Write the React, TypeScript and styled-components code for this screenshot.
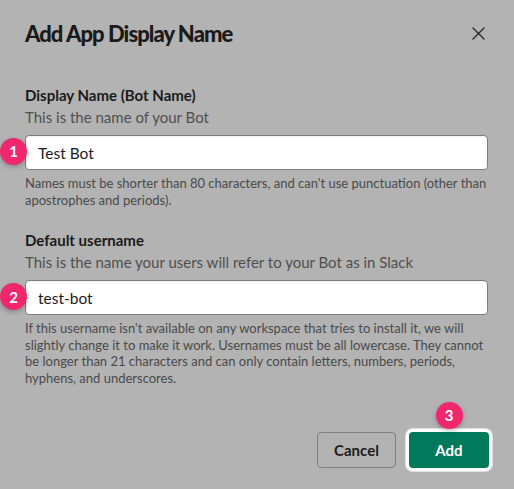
import React from "react";
import styled, { createGlobalStyle } from "styled-components";

const Global = createGlobalStyle`
  html, body { margin: 0; padding: 0; background: #b3b3b3; }
  body { font-family: Lato, "Noto Sans", sans-serif; -webkit-font-smoothing: antialiased; }
  * { box-sizing: border-box; }
`;

const Modal = styled.div`
  position: relative;
  width: 514px;
  height: 489px;
  padding: 0 26px 0 25px;
  display: flex;
  flex-direction: column;
  color: #141414;
`;

const Header = styled.div`
  display: flex;
  align-items: center;
  justify-content: space-between;
  height: 67px;
`;

const Title = styled.h1`
  margin: 0;
  font-size: 22px;
  font-weight: 900;
  letter-spacing: -0.95px;
  line-height: 26px;
  color: #1a1a1a;
`;

const Close = styled.button`
  border: 0;
  background: transparent;
  padding: 0;
  margin-right: 3px;
  width: 14px;
  height: 14px;
  display: flex;
  align-items: center;
  justify-content: center;
  color: #2b2b2b;
`;

const Field = styled.div<{ $top: number }>`
  display: flex;
  flex-direction: column;
  margin-top: ${(p) => p.$top}px;
`;

const Label = styled.div`
  font-size: 15px;
  font-weight: 700;
  line-height: 22px;
  color: #1a1a1a;
`;

const Desc = styled.div`
  font-size: 15px;
  line-height: 22px;
  color: #4f4f4f;
`;

const InputWrap = styled.div`
  position: relative;
  margin-top: 7px;
`;

const Input = styled.div`
  height: 35px;
  background: #fff;
  border: 1px solid #7d7d7d;
  border-radius: 4px;
  display: flex;
  align-items: center;
  padding-left: 12px;
  font-size: 15.5px;
  color: #1d1c1d;
  box-shadow: inset 1px 1px 2px rgba(0,0,0,0.06);
`;

const Help = styled.div`
  margin-top: 5px;
  font-size: 13px;
  line-height: 16.6px;
  color: #4a4a4a;
`;

const Badge = styled.div<{ $left: number; $top: number }>`
  position: absolute;
  left: ${(p) => p.$left}px;
  top: ${(p) => p.$top}px;
  width: 27px;
  height: 27px;
  border-radius: 50%;
  background: #f0276d;
  color: #fff;
  font-size: 15px;
  font-weight: 700;
  display: flex;
  align-items: center;
  justify-content: center;
  box-shadow: 0 2px 5px rgba(0,0,0,0.25);
  z-index: 2;
`;

const Footer = styled.div`
  display: flex;
  justify-content: flex-end;
  align-items: center;
  gap: 13px;
  margin-top: 45px;
`;

const Button = styled.button<{ $primary?: boolean }>`
  height: 36px;
  padding: 0 ${(p) => (p.$primary ? "26px" : "16px")};
  min-width: ${(p) => (p.$primary ? "80px" : "79px")};
  border-radius: 4px;
  font-family: Lato, "Noto Sans", sans-serif;
  font-size: 15px;
  font-weight: 700;
  cursor: pointer;
  border: ${(p) => (p.$primary ? "0" : "1px solid #7f7f7f")};
  background: ${(p) => (p.$primary ? "#007a5a" : "transparent")};
  color: ${(p) => (p.$primary ? "#fff" : "#1d1c1d")};
  box-shadow: ${(p) => (p.$primary ? "0 0 0 3px #fff, 0 0 0 4px rgba(255,255,255,0.6)" : "none")};
  margin-right: ${(p) => (p.$primary ? "-1px" : "0")};
`;

const AddWrap = styled.div`
  position: relative;
`;

export default function App() {
  return (
    <>
      <Global />
      <Modal>
        <Header>
          <Title>Add App Display Name</Title>
          <Close aria-label="Close">
            <svg width="13" height="13" viewBox="0 0 13 13">
              <path d="M1 1 L12 12 M12 1 L1 12" stroke="currentColor" strokeWidth="1.4" strokeLinecap="round" />
            </svg>
          </Close>
        </Header>
        <Field $top={17}>
          <Label>Display Name (Bot Name)</Label>
          <Desc>This is the name of your Bot</Desc>
          <InputWrap>
            <Badge $left={-25} $top={2.5}>1</Badge>
            <Input>Test Bot</Input>
          </InputWrap>
          <Help>
            Names must be shorter than 80 characters, and can't use punctuation (other than
            apostrophes and periods).
          </Help>
        </Field>
        <Field $top={21}>
          <Label>Default username</Label>
          <Desc>This is the name your users will refer to your Bot as in Slack</Desc>
          <InputWrap>
            <Badge $left={-25} $top={3}>2</Badge>
            <Input>test-bot</Input>
          </InputWrap>
          <Help>
            If this username isn't available on any workspace that tries to install it, we will
            slightly change it to make it work. Usernames must be all lowercase. They cannot be
            longer than 21 characters and can only contain letters, numbers, periods, hyphens,
            and underscores.
          </Help>
        </Field>
        <Footer>
          <Button>Cancel</Button>
          <AddWrap>
            <Badge $left={26.5} $top={-30}>3</Badge>
            <Button $primary>Add</Button>
          </AddWrap>
        </Footer>
      </Modal>
    </>
  );
}
